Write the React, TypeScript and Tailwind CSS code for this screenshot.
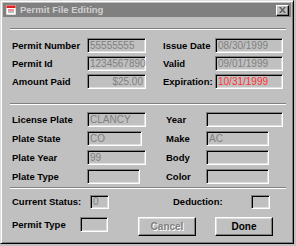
import React from 'react';

const FONT = { fontFamily: '"Liberation Sans", Arial, sans-serif' };

interface FieldProps {
    w: string;
    h?: string;
    value?: string;
    tone?: 'grey' | 'red';
    right?: boolean;
}

// Win95 sunken edit box
const Field: React.FC<FieldProps> = ({ w, h = 'h-[15px]', value = '', tone = 'grey', right }) => (
    <div
        className={`${w} ${h} shrink-0 border border-t-[#808080] border-l-[#808080] border-r-white border-b-white shadow-[inset_1px_1px_#000,inset_-1px_-1px_#dfdfdf] flex items-center text-[10px] leading-none ${right ? 'justify-end pr-[2px]' : 'pl-[2px]'} ${tone === 'red' ? 'text-[#ff3030]' : 'text-[#808080]'}`}
    >
        {value}
    </div>
);

const Label: React.FC<{ w: string; children: React.ReactNode }> = ({ w, children }) => (
    <div className={`${w} shrink-0 text-[9.5px] font-bold text-black leading-none`}>{children}</div>
);

const Sep = ({ className }: { className: string }) => (
    <div className={`ml-[7px] w-[276px] h-[2px] border-t border-t-[#808080] border-b border-b-white ${className}`} />
);

const Row1: React.FC<{ l: string; lv: string; r: string; rv: string; right?: boolean; red?: boolean }> = ({ l, lv, r, rv, right, red }) => (
    <div className="flex items-center pl-[9px]">
        <div className="w-[151px] flex items-center shrink-0">
            <Label w="w-[75px]">{l}</Label>
            <Field w="w-[59px]" value={lv} right={right} />
        </div>
        <Label w="w-[52px]">{r}</Label>
        <Field w="w-[68px]" value={rv} tone={red ? 'red' : 'grey'} />
    </div>
);

const Row2: React.FC<{ l: string; lv?: string; lw: string; r: string; rw: string; rv?: string }> = ({ l, lv, lw, r, rw, rv }) => (
    <div className="flex items-center pl-[9px]">
        <div className="w-[154px] flex items-center shrink-0">
            <Label w="w-[75px]">{l}</Label>
            <Field w={lw} value={lv} />
        </div>
        <Label w="w-[40px]">{r}</Label>
        <Field w={rw} value={rv} />
    </div>
);

const Button: React.FC<{ children: React.ReactNode; disabled?: boolean; className?: string }> = ({ children, disabled, className }) => (
    <div
        className={`w-[58px] h-[19px] shrink-0 border border-t-white border-l-white border-r-black border-b-black shadow-[inset_-1px_-1px_#808080,inset_1px_1px_#dfdfdf] flex items-center justify-center text-[10px] font-bold ${disabled ? 'text-[#808080] [text-shadow:1px_1px_#fff]' : 'text-black'} ${className ?? ''}`}
    >
        {children}
    </div>
);

export default function App() {
    return (
        <div className="w-[296px] h-[246px] bg-[#c0c0c0] overflow-hidden" style={FONT}>
            <div className="w-[294px] h-[244px] border border-t-[#dfdfdf] border-l-[#dfdfdf] border-r-black border-b-black shadow-[inset_1px_1px_#fff,inset_-1px_-1px_#808080] p-[2px] flex flex-col">
                {/* title bar */}
                <div className="h-[14px] bg-[#808080] flex items-center pl-[3px] pr-[2px]">
                    <svg width="10" height="10" viewBox="0 0 10 10" className="shrink-0">
                        <rect x="0" y="0" width="10" height="10" fill="#fff" stroke="#808080" strokeWidth="0.5" />
                        <rect x="0.5" y="0.5" width="9" height="2.5" fill="#e02020" />
                        <rect x="2" y="4.5" width="6" height="1" fill="#e02020" />
                        <rect x="2" y="6.5" width="6" height="1" fill="#808080" />
                    </svg>
                    <span className="ml-[4px] text-[9.5px] font-bold text-[#d0d0d0] leading-none">Permit File Editing</span>
                    <div className="ml-auto w-[13px] h-[11px] bg-[#c0c0c0] border border-t-white border-l-white border-r-black border-b-black shadow-[inset_-1px_-1px_#808080] flex items-center justify-center">
                        <svg width="7" height="6" viewBox="0 0 7 6">
                            <path d="M0 0h2l1.5 2L5 0h2L4.5 3 7 6H5L3.5 4 2 6H0l2.5-3z" fill="#606060" />
                        </svg>
                    </div>
                </div>

                <Sep className="mt-[11px]" />

                <div className="mt-[8px] flex flex-col gap-[3px]">
                    <Row1 l="Permit Number" lv="55555555" r="Issue Date" rv="08/30/1999" />
                    <Row1 l="Permit Id" lv="1234567890" r="Valid" rv="09/01/1999" />
                    <Row1 l="Amount Paid" lv="$25.00" right r="Expiration:" rv="10/31/1999" red />
                </div>

                <Sep className="mt-[14px]" />

                <div className="mt-[7px] flex flex-col gap-[4px]">
                    <Row2 l="License Plate" lv="CLANCY" lw="w-[59px]" r="Year" rw="w-[77px]" />
                    <Row2 l="Plate State" lv="CO" lw="w-[55px]" r="Make" rw="w-[63px]" rv="AC" />
                    <Row2 l="Plate Year" lv="99" lw="w-[59px]" r="Body" rw="w-[63px]" />
                    <Row2 l="Plate Type" lw="w-[53px]" r="Color" rw="w-[63px]" />
                </div>

                <Sep className="mt-[3px]" />

                <div className="mt-[6px] flex items-center pl-[9px]">
                    <Label w="w-[78px]">Current Status:</Label>
                    <Field w="w-[19px]" h="h-[14px]" value="0" />
                    <div className="w-[64px] shrink-0" />
                    <Label w="w-[78px]">Deduction:</Label>
                    <Field w="w-[19px]" h="h-[14px]" />
                </div>

                <div className="mt-[8px] flex items-start pl-[9px]">
                    <div className="w-[68px] h-[15px] flex items-center shrink-0">
                        <Label w="w-[68px]">Permit Type</Label>
                    </div>
                    <Field w="w-[28px]" />
                    <Button disabled className="ml-[30px]">Cancel</Button>
                    <Button className="ml-[19px]">Done</Button>
                </div>
            </div>
        </div>
    );
}
